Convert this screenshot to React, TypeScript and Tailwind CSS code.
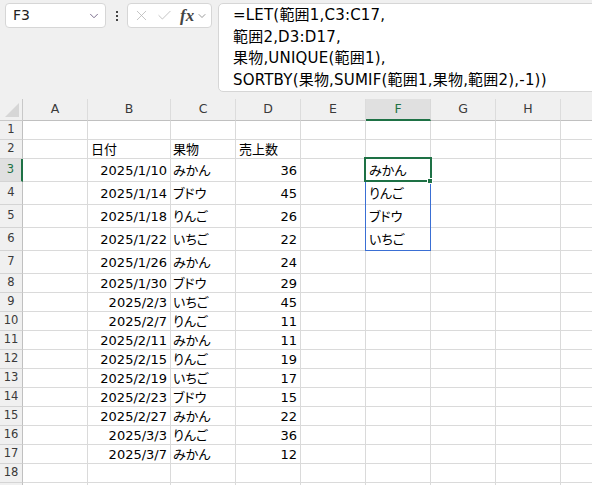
import { X, Check, ChevronDown } from "lucide-react";

type Row = { n: number; h: string; b?: string; c?: string; d?: string; f?: string; head?: boolean };

// Verdana-like latin (DejaVu) + CJK fallback, close to Meiryo UI
const FONT = "font-['DejaVu_Sans','Noto_Sans_CJK_JP',sans-serif]";

const colNames = ["A", "B", "C", "D", "E", "F", "G", "H", "I"];
const colW = [
  "w-[65px]",
  "w-[83px]",
  "w-[65px]",
  "w-[65px]",
  "w-[65px]",
  "w-[65px]",
  "w-[65px]",
  "w-[65px]",
  "w-[65px]",
];

const data: [string, string, string][] = [
  ["2025/1/10", "みかん", "36"],
  ["2025/1/14", "ブドウ", "45"],
  ["2025/1/18", "りんご", "26"],
  ["2025/1/22", "いちご", "22"],
  ["2025/1/26", "みかん", "24"],
  ["2025/1/30", "ブドウ", "29"],
  ["2025/2/3", "いちご", "45"],
  ["2025/2/7", "りんご", "11"],
  ["2025/2/11", "みかん", "11"],
  ["2025/2/15", "りんご", "19"],
  ["2025/2/19", "いちご", "17"],
  ["2025/2/23", "ブドウ", "15"],
  ["2025/2/27", "みかん", "22"],
  ["2025/3/3", "りんご", "36"],
  ["2025/3/7", "みかん", "12"],
];

const spill = ["みかん", "りんご", "ブドウ", "いちご"];

function buildRows(): Row[] {
  const rows: Row[] = [
    { n: 1, h: "h-[19px]" },
    { n: 2, h: "h-[19px]", b: "日付", c: "果物", d: "売上数", head: true },
  ];
  data.forEach(([b, c, d], i) => {
    const n = i + 3;
    rows.push({ n, h: n <= 7 ? "h-[23px]" : "h-[19px]", b, c, d, f: spill[i] });
  });
  rows.push({ n: 18, h: "h-[19px]" });
  rows.push({ n: 19, h: "h-[19px]" });
  return rows;
}

function FormulaBar() {
  return (
    <div className="flex h-[99px] items-start bg-[#f0f0f0] pt-[3px] pl-[5px]">
      <div className="flex h-[25px] w-[101px] items-center justify-between rounded-[4px] border border-[#d6d6d6] bg-white pl-[7px] pr-[4px]">
        <span className="text-[14px] text-[#222]">F3</span>
        <ChevronDown size={14} strokeWidth={1.5} className="text-[#6a5a7e]" />
      </div>
      <div className="flex h-[25px] w-[21px] items-center justify-center">
        <span className="flex flex-col gap-[2px]">
          <span className="h-[2px] w-[2px] bg-[#444]" />
          <span className="h-[2px] w-[2px] bg-[#444]" />
          <span className="h-[2px] w-[2px] bg-[#444]" />
        </span>
      </div>
      <div className="flex h-[25px] w-[85px] items-center rounded-[4px] border border-[#d6d6d6] bg-white pl-[5px]">
        <X size={17} strokeWidth={1.1} className="text-[#b4b4b4]" />
        <Check size={17} strokeWidth={1.1} className="ml-[6px] text-[#b4b4b4]" />
        <span className="ml-[7px] font-['Liberation_Serif',serif] text-[17px] font-bold italic leading-none text-[#444]">
          fx
        </span>
        <ChevronDown size={12} strokeWidth={1.5} className="ml-[2px] text-[#777]" />
      </div>
      <div className="ml-[6px] -mr-[12px] h-[89px] flex-1 rounded-[5px] border border-[#d6d6d6] bg-white pl-[14px] pt-[1px] text-[15px] leading-[21.6px] tracking-[0.2px] text-black">
        <div>=LET(範囲1,C3:C17,</div>
        <div>範囲2,D3:D17,</div>
        <div>果物,UNIQUE(範囲1),</div>
        <div>SORTBY(果物,SUMIF(範囲1,果物,範囲2),-1))</div>
      </div>
    </div>
  );
}

function HeaderRow() {
  return (
    <div className="flex h-[22px] bg-[#f0f0f0]">
      <div className="relative w-[23px] shrink-0 border-r border-b border-[#c8c8c8]">
        <svg className="absolute right-[3px] bottom-[3px]" width="14" height="14" viewBox="0 0 14 14">
          <polygon points="14,0 14,14 0,14" fill="#d6d6d6" />
        </svg>
      </div>
      {colNames.map((c, i) => {
        const sel = c === "F";
        return (
          <div
            key={c}
            className={`${colW[i]} shrink-0 flex items-center justify-center border-r text-[12.5px] ${
              sel
                ? "bg-[#e0e0e0] border-[#d8d8d8] border-b-2 border-b-[#1e7145] text-[#1e7145]"
                : "border-[#dcdcdc] border-b border-b-[#c0c0c0] text-[#3a3a3a]"
            }`}
          >
            {/* column I is scrolled mostly out of view */}
            {c === "I" ? "" : c}
          </div>
        );
      })}
    </div>
  );
}

export default function App() {
  const rows = buildRows();
  return (
    <div className={`h-[485px] w-[592px] overflow-hidden bg-white ${FONT}`}>
      <FormulaBar />
      <div className="relative [font-feature-settings:'palt']">
        <HeaderRow />
        {rows.map((r) => {
          const sel = r.n === 3;
          return (
            <div key={r.n} className={`flex ${r.h}`}>
              <div
                className={`w-[23px] shrink-0 flex items-center justify-center border-b border-[#d4d4d4] text-[11.5px] ${
                  sel
                    ? "bg-[#e0e0e0] border-r-2 border-r-[#1e7145] text-[#1e7145]"
                    : "bg-[#f0f0f0] border-r border-r-[#c0c0c0] text-[#3a3a3a]"
                }`}
              >
                {r.n < 19 ? r.n : ""}
              </div>
              {colNames.map((c, i) => {
                let text = "";
                let right = false;
                if (c === "B" && r.b) {
                  text = r.b;
                  right = !r.head;
                }
                if (c === "C" && r.c) text = r.c;
                if (c === "D" && r.d) {
                  text = r.d;
                  right = !r.head;
                }
                if (c === "F" && r.f) text = r.f;
                return (
                  <div
                    key={c}
                    className={`${colW[i]} shrink-0 flex items-center overflow-hidden whitespace-nowrap border-r border-b border-[#dadada] text-[13px] leading-none text-black ${
                      right ? "justify-end pr-[3px]" : c === "C" ? "pl-[2px]" : "pl-[3px]"
                    }`}
                  >
                    {text}
                  </div>
                );
              })}
            </div>
          );
        })}
        {/* spill range outline F3:F6 */}
        <div className="pointer-events-none absolute left-[365px] top-[59px] h-[93px] w-[66px] border border-[#3a6fd4]" />
        {/* active cell F3 */}
        <div className="pointer-events-none absolute left-[364px] top-[58px] h-[25px] w-[68px] border-2 border-[#1e7145]" />
        <div className="pointer-events-none absolute left-[427px] top-[79px] h-[6px] w-[6px] border border-white bg-[#1e7145]" />
      </div>
    </div>
  );
}
